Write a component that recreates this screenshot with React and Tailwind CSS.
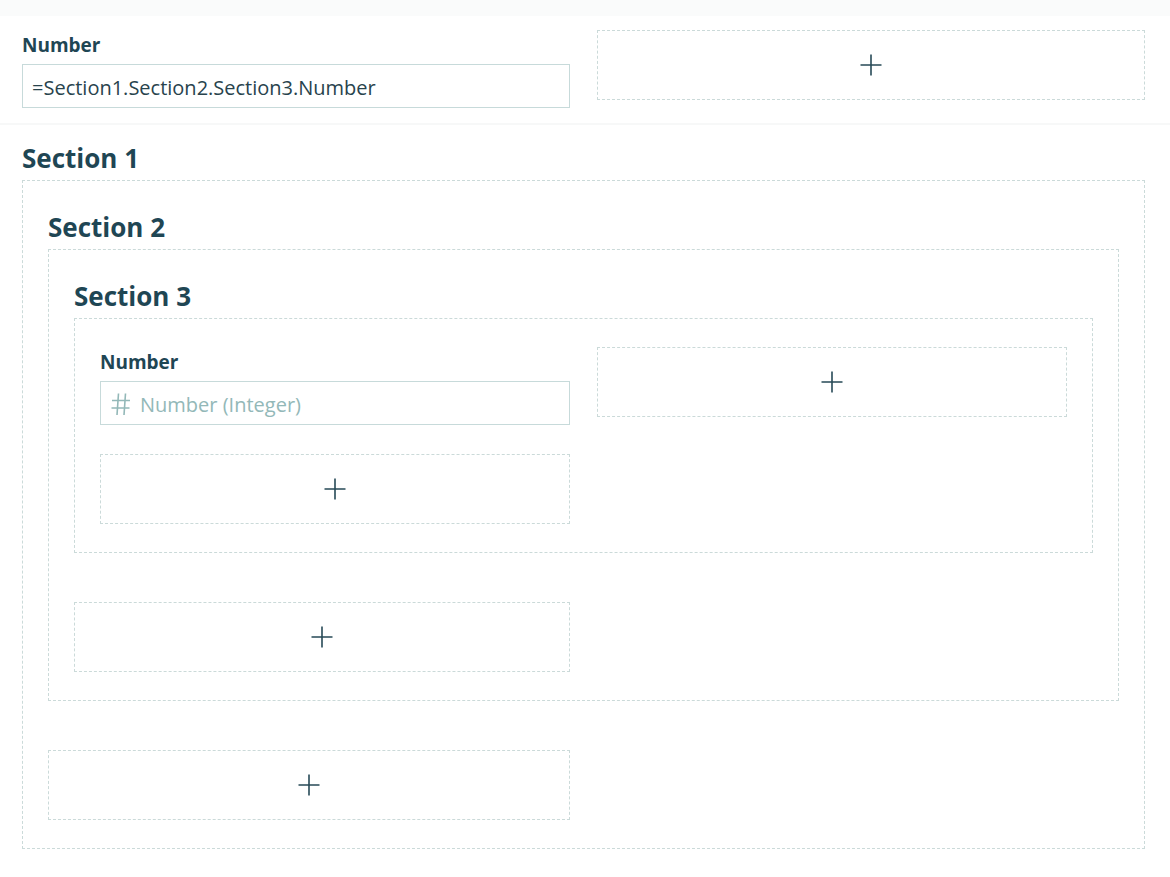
import React from 'react';

const PlusIcon = () => (
  <svg width="24" height="24" viewBox="0 0 24 24" fill="none">
    <path d="M1.5 12h21M12 1.5v21" stroke="#274a57" strokeWidth="1.6" />
  </svg>
);

const HashIcon = () => (
  <svg width="21" height="26" viewBox="0 0 21 26" fill="none">
    <path d="M8.5 2.5L7 24M15.5 2.5L14 24M2 9.5h18M1.5 17h18" stroke="#93b8b8" strokeWidth="1.6" />
  </svg>
);

const AddSlot = () => (
  <div className="h-[70px] border border-dashed border-[#cbdad9] flex items-center justify-center cursor-pointer">
    <PlusIcon />
  </div>
);

const Field = ({ label, children }) => (
  <div>
    <div className="h-[30px] mb-1 text-[19px] leading-[30px] font-bold text-[#1f4654]">{label}</div>
    <div className="h-[44px] border border-[#c7dada] flex items-center pl-[9px] pr-[9px] pt-[3px] text-[20px] text-[#28434d]">
      {children}
    </div>
  </div>
);

const Section = ({ title, children, last }) => (
  <div className={`col-span-2 ${last ? '' : 'mb-5'}`}>
    <h2 className="h-[34px] pt-[2px] mb-[6px] text-[26px] leading-[32px] font-bold text-[#1f4654]">{title}</h2>
    <div className="border border-dashed border-[#cbdad9] px-[25px] py-[28px]">
      <div className="grid grid-cols-2 gap-x-[27px] gap-y-[29px] items-start">{children}</div>
    </div>
  </div>
);

export default function App() {
  return (
    <div className="min-h-screen bg-white" style={{ fontFamily: '"Open Sans", "Noto Sans", sans-serif' }}>
      <div className="h-4 bg-[#fafbfb]" />
      <div className="pl-[22px] pr-[25px] pt-[14px] pb-[15px]">
        <div className="grid grid-cols-2 gap-x-[27px] items-start">
          <Field label="Number">
            <span>=Section1.Section2.Section3.Number</span>
          </Field>
          <AddSlot />
        </div>
      </div>
      <div className="h-[2px] bg-[#f7f8f8]" />
      <div className="pl-[22px] pr-[25px] pt-[15px] pb-6">
        <div className="grid grid-cols-2 gap-x-[27px]">
          <Section title="Section 1" last>
            <Section title="Section 2">
              <Section title="Section 3">
                <Field label="Number">
                  <span className="flex items-center gap-[9px] -mt-[2px] text-[#93b8b8]">
                    <HashIcon />
                    <span className="pt-[2px]">Number (Integer)</span>
                  </span>
                </Field>
                <AddSlot />
                <AddSlot />
              </Section>
              <AddSlot />
            </Section>
            <AddSlot />
          </Section>
        </div>
      </div>
    </div>
  );
}
